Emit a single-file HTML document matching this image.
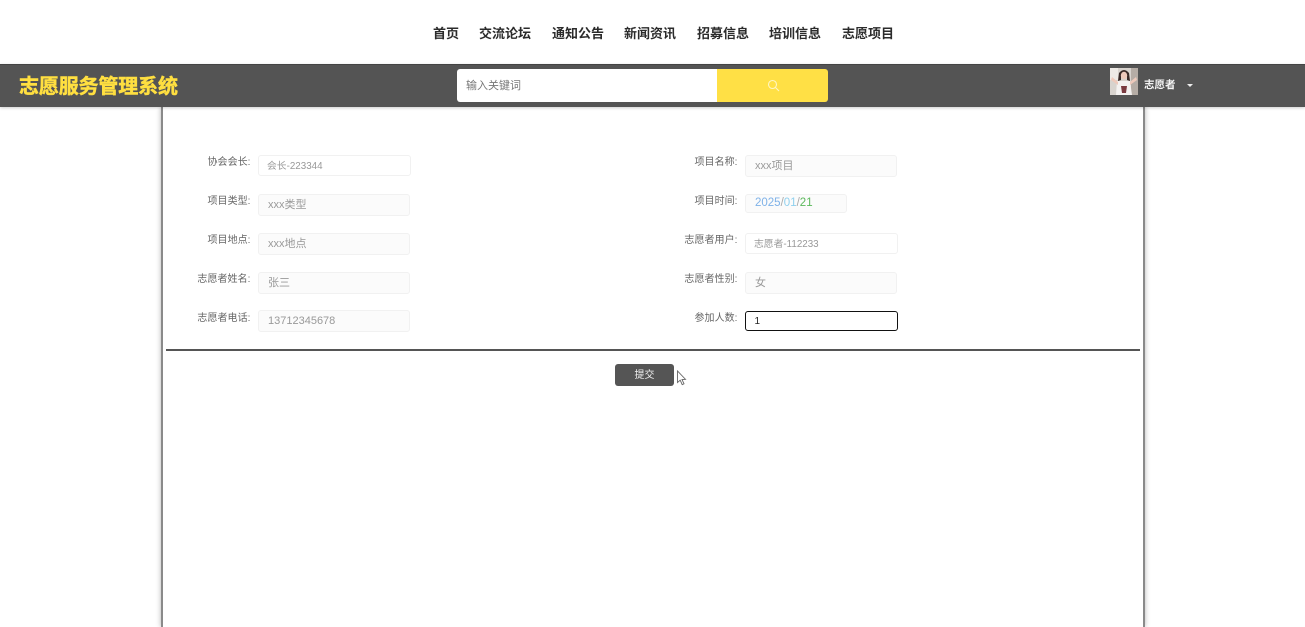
<!DOCTYPE html>
<html lang="zh">
<head>
<meta charset="utf-8">
<title>志愿服务管理系统</title>
<style>
html,body{margin:0;padding:0;background:#fff;}
body{width:1305px;height:627px;overflow:hidden;position:relative;font-family:"Liberation Sans","Noto Sans CJK SC",sans-serif;}
#p{position:absolute;left:0;top:0;width:1305px;height:627px;overflow:hidden;filter:blur(.35px);}
.a{position:absolute;white-space:nowrap;}
.nav{top:24px;font-size:13px;line-height:20px;font-weight:bold;color:#2b2b2b;}
.lb{font-size:10px;line-height:14px;color:#666;text-align:right;width:90px;letter-spacing:.05px;}
.f{box-sizing:border-box;border:1px solid #f1f1f1;border-radius:3px;background:#fbfbfb;color:#999;font-size:11px;padding-left:9px;}
.w{background:#fff;font-size:9.8px;padding-left:8px;}
</style>
</head>
<body>
<div id="p">
<div class="a nav" style="left:433px">首页</div>
<div class="a nav" style="left:479px">交流论坛</div>
<div class="a nav" style="left:552px">通知公告</div>
<div class="a nav" style="left:624px">新闻资讯</div>
<div class="a nav" style="left:697px">招募信息</div>
<div class="a nav" style="left:769px">培训信息</div>
<div class="a nav" style="left:842px">志愿项目</div>

<div class="a" style="left:161px;top:107px;width:984px;height:520px;background:#fff;border-left:2px solid #8a8a8a;border-right:2px solid #8a8a8a;box-sizing:border-box;box-shadow:0 0 5px rgba(0,0,0,.3);"></div>

<div class="a" style="left:0;top:64px;width:1305px;height:43px;background:#545454;border-top:1px solid #444;box-sizing:border-box;box-shadow:0 1px 3px rgba(0,0,0,.2);"></div>
<div class="a" style="left:19px;top:73px;font-size:20px;line-height:28px;font-weight:bold;color:#ffdf40;letter-spacing:-.15px;-webkit-text-stroke:.5px #ffdf40;">志愿服务管理系统</div>

<div class="a" style="left:457px;top:69px;width:260px;height:33px;background:#fff;border-radius:3px 0 0 3px;"></div>
<div class="a" style="left:466px;top:78px;font-size:11px;line-height:16px;color:#777;">输入关键词</div>
<div class="a" style="left:717px;top:69px;width:111px;height:33px;background:#ffe045;border-radius:0 3px 3px 0;"></div>
<svg class="a" style="left:767px;top:79px" width="13" height="13" viewBox="0 0 13 13" fill="none" stroke="#fff6c4" stroke-width="1.1"><circle cx="5.5" cy="5.5" r="4"/><path d="M8.5 8.5 L12 12"/></svg>

<svg class="a" style="left:1110px;top:68px" width="28" height="27" viewBox="0 0 28 27">
<rect width="28" height="27" fill="#d8d3ce"/>
<rect x="0" y="0" width="8" height="12" fill="#eeeae6"/>
<rect x="21" y="0" width="7" height="27" fill="#b5aca5"/>
<path d="M7 13 L20 13 L22 27 L6 27 Z" fill="#f4f1f0"/>
<path d="M9 5 Q14 -1 19 5 L20 13 L17 12 L17 8 L11 8 L11 12 L8 13 Z" fill="#3a2a28"/>
<ellipse cx="14" cy="7.5" rx="3.2" ry="3.8" fill="#eec9bb"/>
<path d="M2 9 L8 14 L8 17 L1 12 Z" fill="#eec9bb"/>
<path d="M26 9 L20 14 L20 17 L27 12 Z" fill="#eec9bb"/>
<path d="M11 18 L17 18 L16 25 L12 25 Z" fill="#7a3a40"/>
</svg>
<div class="a" style="left:1144px;top:78px;font-size:10.5px;line-height:15px;font-weight:bold;color:#f5f5f5;">志愿者</div>
<div class="a" style="left:1187px;top:84px;width:0;height:0;border-left:3px solid transparent;border-right:3px solid transparent;border-top:3px solid #eee;"></div>

<div class="a lb" style="left:160.500px;top:156px">协会会长:</div>
<div class="a f w" style="left:258px;top:155px;width:153px;height:21px;line-height:21px;">会长-223344</div>
<div class="a lb" style="left:160.500px;top:195px">项目类型:</div>
<div class="a f" style="left:258px;top:194px;width:152px;height:22px;line-height:21px;">xxx类型</div>
<div class="a lb" style="left:160.500px;top:234px">项目地点:</div>
<div class="a f" style="left:258px;top:233px;width:152px;height:22px;line-height:21px;">xxx地点</div>
<div class="a lb" style="left:160.500px;top:273px">志愿者姓名:</div>
<div class="a f" style="left:258px;top:272px;width:152px;height:22px;line-height:21px;">张三</div>
<div class="a lb" style="left:160.500px;top:312px">志愿者电话:</div>
<div class="a f" style="left:258px;top:310px;width:152px;height:22px;line-height:21px;">13712345678</div>

<div class="a lb" style="left:647.500px;top:156px">项目名称:</div>
<div class="a f" style="left:745px;top:155px;width:152px;height:22px;line-height:21px;">xxx项目</div>
<div class="a lb" style="left:647.500px;top:195px">项目时间:</div>
<div class="a f" style="left:745px;top:194px;width:102px;height:19px;line-height:17px;font-size:11.5px;"><span style="color:#7fb2e8">2025</span><span style="color:#aaa">/</span><span style="color:#8fd0ee">01</span><span style="color:#aaa">/</span><span style="color:#5cb85c">21</span></div>
<div class="a lb" style="left:647.500px;top:234px">志愿者用户:</div>
<div class="a f w" style="left:745px;top:233px;width:153px;height:21px;line-height:21px;">志愿者-112233</div>
<div class="a lb" style="left:647.500px;top:273px">志愿者性别:</div>
<div class="a f" style="left:745px;top:272px;width:152px;height:22px;line-height:21px;">女</div>
<div class="a lb" style="left:647.500px;top:312px">参加人数:</div>
<div class="a" style="box-sizing:border-box;left:745px;top:311px;width:153px;height:20px;border:1.5px solid #111;border-radius:3px;background:#fff;font-size:10px;line-height:19px;color:#222;padding-left:8.500px;">1</div>

<div class="a" style="left:166px;top:349px;width:974px;height:2px;background:#555;"></div>

<div class="a" style="left:615px;top:364px;width:59px;height:22px;background:#555;border-radius:3px;color:#f2f2f2;font-size:10px;line-height:22px;padding-top:1px;box-sizing:border-box;text-align:center;">提交</div>
<svg class="a" style="left:676px;top:370px" width="11" height="16" viewBox="0 0 11 16"><path d="M1.5 1 L1.5 12.5 L4.2 10.2 L6.2 14.6 L8 13.8 L6 9.5 L9.5 9.3 Z" fill="#fff" stroke="#666" stroke-width=".9"/></svg>
</div>
</body>
</html>
